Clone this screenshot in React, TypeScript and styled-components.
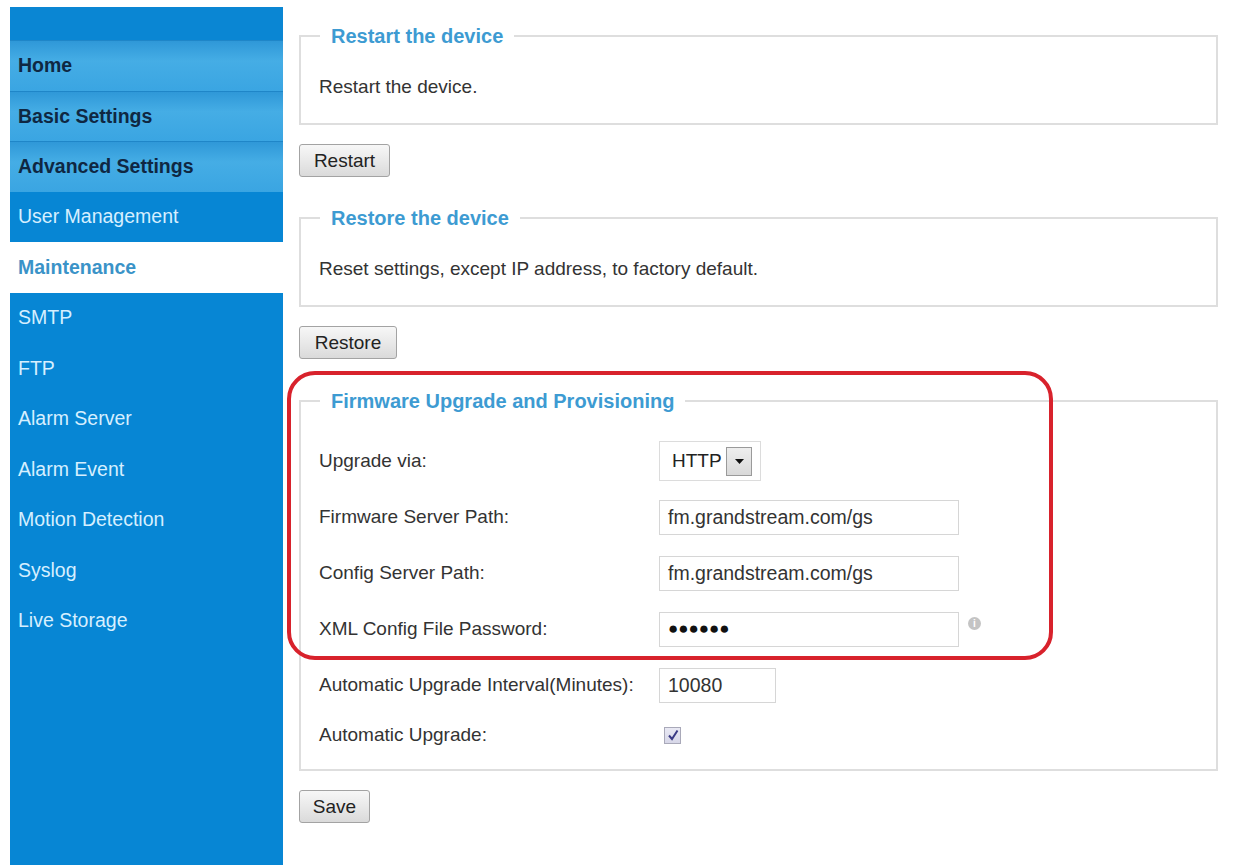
import React from 'react';
import styled, { createGlobalStyle } from 'styled-components';

const GlobalStyle = createGlobalStyle`
  html, body {
    margin: 0;
    padding: 0;
    background: #fff;
  }
  body {
    font-family: "Liberation Sans", Arial, sans-serif;
    color: #333;
  }
`;

const Page = styled.div`
  display: flex;
  align-items: flex-start;
  padding: 7px 0 0 10px;
  width: 1235px;
  height: 868px;
  box-sizing: border-box;
  overflow: hidden;
`;

const Sidebar = styled.nav`
  width: 273px;
  height: 858px;
  flex-shrink: 0;
  display: flex;
  flex-direction: column;
  background: #0786d4;
`;

const SideTop = styled.div`
  height: 33px;
  background: #0a86d3;
`;

const NavItem = styled.div<{ variant: 'group' | 'item' | 'active' }>`
  height: 50.5px;
  display: flex;
  align-items: center;
  padding-left: 8px;
  font-size: 19.5px;
  box-sizing: border-box;
  ${p =>
    p.variant === 'group'
      ? `
    background: linear-gradient(180deg, #2f98d8 0%, #45ade5 40%, #3aa5e2 100%);
    border-top: 1px solid #1f86c8;
    color: #0f2742;
    font-weight: bold;
  `
      : p.variant === 'active'
      ? `
    background: #fff;
    color: #3a93c8;
    font-weight: bold;
  `
      : `
    background: #0786d4;
    color: #d6efff;
  `}
`;

const Main = styled.main`
  position: relative;
  margin-left: 16px;
  width: 919px;
  padding-top: 19px;
  display: flex;
  flex-direction: column;
  align-items: flex-start;
`;

const Section = styled.fieldset<{ pad: string }>`
  width: 100%;
  box-sizing: border-box;
  margin: 0;
  border: 2px solid #dedede;
  padding: ${p => p.pad};
`;

const Legend = styled.legend`
  margin-left: 1px;
  padding: 0 11px;
  font-size: 20px;
  font-weight: bold;
  line-height: 20px;
  color: #3d9bd2;
`;

const Text = styled.div`
  font-size: 19px;
  line-height: 20px;
  color: #333;
`;

const Button = styled.button<{ gap: number; w: number }>`
  margin-top: 19px;
  margin-bottom: ${p => p.gap}px;
  width: ${p => p.w}px;
  height: 33px;
  border: 1px solid #a3a3a3;
  border-radius: 3px;
  background: linear-gradient(180deg, #f7f7f7 0%, #e9e9e9 50%, #dadada 100%);
  font-family: "Liberation Sans", Arial, sans-serif;
  font-size: 19px;
  color: #222;
  padding: 0;
`;

const Row = styled.div<{ h: number }>`
  display: flex;
  align-items: center;
  height: ${p => p.h}px;
`;

const Label = styled.div`
  width: 340px;
  flex-shrink: 0;
  font-size: 19px;
  color: #333;
`;

const Input = styled.div<{ w: number }>`
  width: ${p => p.w}px;
  height: 35px;
  box-sizing: border-box;
  border: 1px solid #d6d6d6;
  display: flex;
  align-items: center;
  padding-left: 8px;
  font-size: 19.5px;
  color: #333;
`;

const Dots = styled.span`
  font-size: 17px;
  color: #111;
`;

const Select = styled.div`
  width: 102px;
  height: 40px;
  box-sizing: border-box;
  border: 1px solid #dcdcdc;
  display: flex;
  align-items: center;
  justify-content: space-between;
  padding: 0 8px 0 12px;
  font-size: 19px;
  color: #222;
`;

const ArrowBox = styled.div`
  width: 26px;
  height: 29px;
  box-sizing: border-box;
  border: 1px solid #9a9a9a;
  background: linear-gradient(180deg, #eeeeee, #d9d9d9);
  display: flex;
  align-items: center;
  justify-content: center;
`;

const Info = styled.div`
  width: 13px;
  height: 13px;
  border-radius: 50%;
  background: #c4c4c4;
  color: #fff;
  font-size: 10px;
  font-weight: bold;
  display: flex;
  align-items: center;
  justify-content: center;
  margin-left: 9px;
  margin-top: -12px;
`;

const Check = styled.div`
  width: 17px;
  height: 17px;
  box-sizing: border-box;
  margin-left: 5px;
  border: 1px solid #a9a9b9;
  background: linear-gradient(180deg, #e9e9f4, #d7d7e8);
  display: flex;
  align-items: center;
  justify-content: center;
`;

const Highlight = styled.div`
  position: absolute;
  left: -12px;
  top: 364px;
  width: 766px;
  height: 289px;
  box-sizing: border-box;
  border: 4px solid #d8222c;
  border-radius: 28px;
  pointer-events: none;
`;

const navItems: { label: string; variant: 'group' | 'item' | 'active' }[] = [
  { label: 'Home', variant: 'group' },
  { label: 'Basic Settings', variant: 'group' },
  { label: 'Advanced Settings', variant: 'group' },
  { label: 'User Management', variant: 'item' },
  { label: 'Maintenance', variant: 'active' },
  { label: 'SMTP', variant: 'item' },
  { label: 'FTP', variant: 'item' },
  { label: 'Alarm Server', variant: 'item' },
  { label: 'Alarm Event', variant: 'item' },
  { label: 'Motion Detection', variant: 'item' },
  { label: 'Syslog', variant: 'item' },
  { label: 'Live Storage', variant: 'item' },
];

const App: React.FC = () => {
  return (
    <>
      <GlobalStyle />
      <Page>
        <Sidebar>
          <SideTop />
          {navItems.map(item => (
            <NavItem key={item.label} variant={item.variant}>
              {item.label}
            </NavItem>
          ))}
        </Sidebar>
        <Main>
          <Section pad="31px 18px 26px">
            <Legend>Restart the device</Legend>
            <Text>Restart the device.</Text>
          </Section>
          <Button gap={31} w={91}>Restart</Button>

          <Section pad="31px 18px 26px">
            <Legend>Restore the device</Legend>
            <Text>Reset settings, except IP address, to factory default.</Text>
          </Section>
          <Button gap={32} w={98}>Restore</Button>

          <Section pad="22px 18px 12px">
            <Legend>Firmware Upgrade and Provisioning</Legend>
            <Row h={56}>
              <Label>Upgrade via:</Label>
              <Select>
                HTTP
                <ArrowBox>
                  <svg width="9" height="5" viewBox="0 0 9 5">
                    <path d="M0 0h9L4.5 5z" fill="#111" />
                  </svg>
                </ArrowBox>
              </Select>
            </Row>
            <Row h={56}>
              <Label>Firmware Server Path:</Label>
              <Input w={300}>fm.grandstream.com/gs</Input>
            </Row>
            <Row h={56}>
              <Label>Config Server Path:</Label>
              <Input w={300}>fm.grandstream.com/gs</Input>
            </Row>
            <Row h={56}>
              <Label>XML Config File Password:</Label>
              <Input w={300}>
                <Dots>●●●●●●</Dots>
              </Input>
              <Info>i</Info>
            </Row>
            <Row h={56}>
              <Label>Automatic Upgrade Interval(Minutes):</Label>
              <Input w={117}>10080</Input>
            </Row>
            <Row h={44}>
              <Label>Automatic Upgrade:</Label>
              <Check>
                <svg width="12" height="12" viewBox="0 0 12 12">
                  <path d="M2 6.5l3 3.5L10.5 1.5" stroke="#3b3b85" strokeWidth="2" fill="none" />
                </svg>
              </Check>
            </Row>
          </Section>
          <Button gap={0} w={71}>Save</Button>

          <Highlight />
        </Main>
      </Page>
    </>
  );
};

export default App;
